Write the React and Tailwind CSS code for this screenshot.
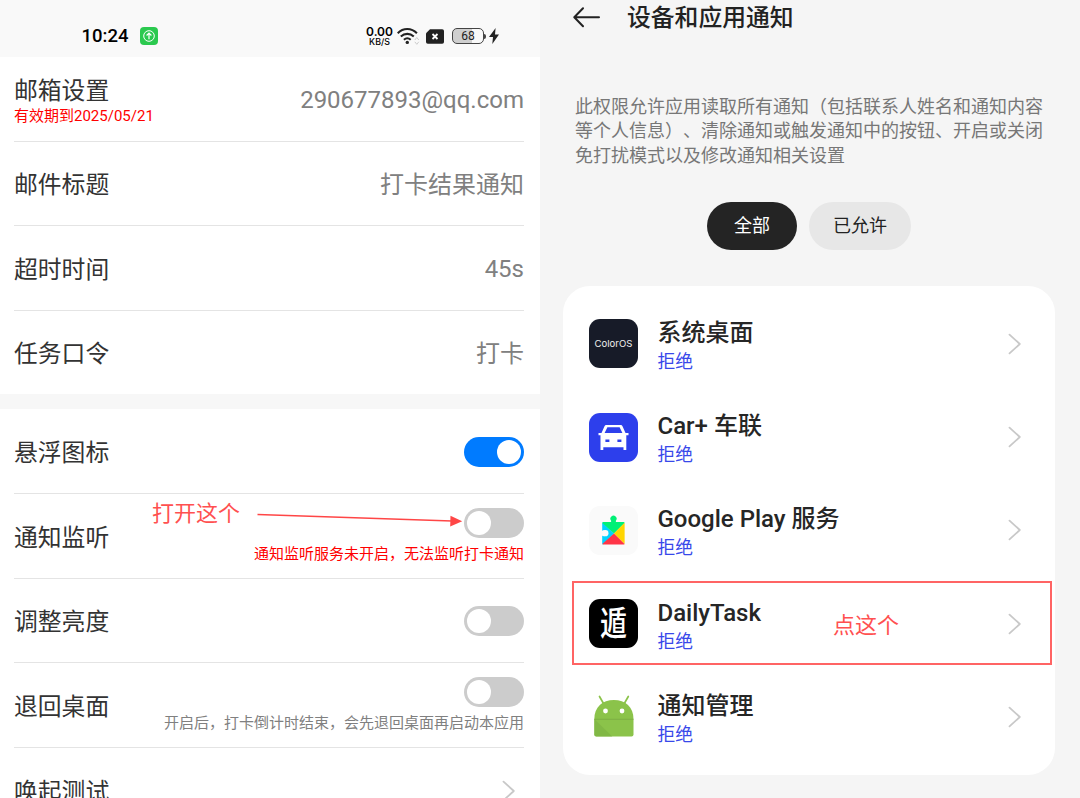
import React from "react";

function Chevron({ className = "" }) {
  return (
    <svg className={`h-[22px] w-[14px] shrink-0 ${className}`} viewBox="0 0 14 22" fill="none" stroke="#c8c8c8" strokeWidth="1.8" strokeLinecap="round" strokeLinejoin="round">
      <path d="M1.5 1.7 11.8 11 1.5 20.3" />
    </svg>
  );
}

function Toggle({ on = false }) {
  return (
    <div className={`flex h-[30px] w-[60px] items-center rounded-full px-[3px] ${on ? "justify-end bg-[#007bff]" : "justify-start bg-[#cccccc]"}`}>
      <div className="size-[24px] rounded-full bg-white" />
    </div>
  );
}

function Row({ label, height, last = false, children }) {
  return (
    <div className={`flex shrink-0 items-center justify-between pt-px ${height} ${last ? "" : "border-b border-[#e4e4e4]"}`}>
      <div className="pt-[2px] text-[23.8px] leading-8 text-[#333333]">{label}</div>
      {children}
    </div>
  );
}

function Value({ children }) {
  return <div className="pt-px text-[24px] leading-8 text-[#808080]">{children}</div>;
}

function StatusBar() {
  return (
    <div className="flex h-[57px] shrink-0 items-center justify-between bg-[#f9f9f9] pt-[15px] pr-[41px] pl-[81.500px]">
      <div className="flex items-center">
        <div className="w-[58.500px] text-[18.500px] leading-6 font-medium text-black">10:24</div>
        <svg className="size-[18px]" viewBox="0 0 18 18" fill="none" stroke="#fff">
          <rect width="18" height="18" rx="4" fill="#2bc94f" stroke="none" />
          <circle cx="9" cy="9" r="5.3" strokeWidth="1" />
          <path d="M9 12.2V6.2M6.6 8.5 9 6.1l2.4 2.4" strokeWidth="1.2" />
        </svg>
      </div>
      <div className="flex items-center">
        <div className="flex w-[27px] flex-col items-center font-[Inter] text-black">
          <div className="text-[12px] leading-[10px] font-semibold">0.00</div>
          <div className="text-[8.800px] leading-[9px] font-medium">KB/S</div>
        </div>
        <svg className="ml-[4px] h-[18px] w-[23px]" viewBox="0 0 23 18" fill="none">
          <path d="M.7 6.200C6.200.6 14.400.6 19.900 6.200M3.800 9.600c3.900-3.700 9.100-3.700 13 0M6.900 12.700c2.200-1.900 4.600-1.900 6.800 0" stroke="#222" strokeWidth="2.100" />
          <circle cx="10.3" cy="15.400" r="1.700" fill="#222" />
          <path d="m17.800 13 2-2.500 2 2.500M17.800 14.800l2 2.500 2-2.500" stroke="#ccc" strokeWidth="1" />
        </svg>
        <svg className="ml-[6px] h-[15px] w-[18px]" viewBox="0 0 18 15">
          <path d="M4 .3h12.2A1.8 1.8 0 0 1 18 2.100v10.800a1.800 1.800 0 0 1-1.800 1.800H1.800A1.800 1.800 0 0 1 0 12.900V4.300z" fill="#222" />
          <path d="m6.500 5 5 5m0-5-5 5" stroke="#fff" strokeWidth="1.800" />
        </svg>
        <div className="ml-[8px] flex h-[16px] w-[32px] items-center justify-center rounded-[5px] border-[1.500px] border-[#444] bg-linear-to-r from-[#cfcfcf] from-65% to-[#f9f9f9] to-65% text-[12px] leading-[14px] text-[#222]">68</div>
        <div className="h-[5px] w-[2px] rounded-r bg-[#444]" />
        <svg className="ml-[3px] h-[16px] w-[10px]" viewBox="0 0 10 16">
          <path d="M6.600 0 0 9.100h4L3.300 16 10 6.400H6z" fill="#222" />
        </svg>
      </div>
    </div>
  );
}

function SettingsPanel() {
  return (
    <section className="relative flex h-[798px] w-[540px] shrink-0 flex-col overflow-hidden bg-white">
      <StatusBar />
      <div className="flex flex-col pr-[16px] pl-[14px]">
        <Row
          height="h-[85px]"
          label={
            <div className="pt-px">
              <div className="leading-[30px]">邮箱设置</div>
              <div className="text-[15px] leading-[21px] text-[#ff0000]">有效期到2025/05/21</div>
            </div>
          }
        >
          <Value>290677893@qq.com</Value>
        </Row>
        <Row height="h-[84px]" label="邮件标题"><Value>打卡结果通知</Value></Row>
        <Row height="h-[85px]" label="超时时间"><Value>45s</Value></Row>
        <Row height="h-[83px]" label="任务口令" last><Value>打卡</Value></Row>
      </div>
      <div className="h-[15px] shrink-0 bg-[#f7f7f7]" />
      <div className="flex flex-col pr-[16px] pl-[14px]">
        <Row height="h-[85px]" label="悬浮图标"><Toggle on /></Row>
        <Row height="h-[85px]" label="通知监听">
          <div className="flex flex-col items-end gap-1">
            <Toggle />
            <div className="pt-px text-[15px] leading-[22px] text-[#ff0000]">通知监听服务未开启，无法监听打卡通知</div>
          </div>
        </Row>
        <Row height="h-[84px]" label="调整亮度"><Toggle /></Row>
        <Row height="h-[85px]" label="退回桌面">
          <div className="flex flex-col items-end gap-1">
            <Toggle />
            <div className="pt-px text-[15px] leading-[22px] text-[#808080]">开启后，打卡倒计时结束，会先退回桌面再启动本应用</div>
          </div>
        </Row>
        <Row height="h-[84px]" label="唤起测试" last><Chevron className="mr-[8px]" /></Row>
      </div>
      <div className="absolute top-[498px] left-[152px] text-[22px] leading-8 text-[#ff5050]">打开这个</div>
      <svg className="absolute top-[508px] left-[256px] h-[20px] w-[208px]" viewBox="0 0 208 20">
        <path d="M1.500 6.500 196 13" stroke="#ff4646" strokeWidth="1.600" />
        <path d="m194.500 7.700 11.700 5.600-12 5.200z" fill="#ff4646" />
      </svg>
    </section>
  );
}

function ColorOsIcon() {
  return (
    <div className="flex size-[49px] items-center justify-center rounded-[11px] bg-[#171b28] font-[Inter] text-[9.600px] leading-none text-[#eeeeee]">ColorOS</div>
  );
}

function CarIcon() {
  return (
    <svg className="size-[49px]" viewBox="0 0 49 49">
      <rect width="49" height="49" rx="11" fill="#2d3fec" />
      <path fillRule="evenodd" fill="#fff" d="M17.500 12h14c.9 0 1.600.5 2 1.300l3 6.700H39.500v2.300h-2.200V37h-2.800v-2.800H14.300V37h-2.800V22.300H9.500V20h3l3-6.700c.4-.8 1.100-1.300 2-1.300zm.9 2.300L15.600 20h17.800l-2.800-5.700zM16.400 26.600v2.400h4v-2.400zm12 0v2.400h4v-2.400z" />
    </svg>
  );
}

function PlayIcon() {
  return (
    <svg className="size-[49px]" viewBox="0 0 49 49">
      <rect width="49" height="49" rx="11" fill="#fafafa" />
      <path d="M13.700 16.500 25 27.500 14 38.500a1 1 0 0 1-.8-1v-7.700a2.900 2.900 0 1 0 0-5V17z" fill="#00d2ff" />
      <circle cx="16.400" cy="27.200" r="3.100" fill="#fafafa" />
      <path d="M12.500 25.800h3v2.800h-3z" fill="#fafafa" />
      <path d="M13.300 16.900c0-.6.400-.9 1-.9h7.800v-1.200a3.100 3.100 0 1 1 4.800 0V16h7.700c.6 0 1 .3 1 .9L25 27.500z" fill="#00f076" />
      <path d="M35.600 16.700v21.200L25 27.500z" fill="#ffd500" />
      <path d="M25 27.500 35.600 37.900c-.2.400-.5.600-1 .6H14.200c-.4 0-.7-.2-.9-.5z" fill="#ff3547" />
    </svg>
  );
}

function DailyTaskIcon() {
  return (
    <div className="flex size-[49px] items-center justify-center rounded-[11px] bg-black text-[27px] leading-none font-medium text-white">
      <span className="translate-y-[2px] scale-y-[1.280]">遁</span>
    </div>
  );
}

function AndroidIcon() {
  return (
    <svg className="size-[49px]" viewBox="0 0 49 49">
      <path d="m10.500 4.500 4 7M39.300 4.500l-4 7" stroke="#8bc34a" strokeWidth="1.700" strokeLinecap="round" />
      <path d="M5.300 27C5.300 15 13.500 8 24.900 8s19.600 7 19.600 19z" fill="#8bc34a" />
      <path d="M5.300 27h39.200v15.500a2 2 0 0 1-2 2H7.300a2 2 0 0 1-2-2z" fill="#8bc34a" />
      <path d="m5.300 27 18 17.500h-16a2 2 0 0 1-2-2z" fill="#7eb443" opacity=".7" />
      <path d="M5.300 27.300h39.200" stroke="#7aab42" strokeWidth=".8" />
      <circle cx="16.500" cy="19" r="2.400" fill="#fff" />
      <circle cx="33" cy="19" r="2.400" fill="#fff" />
    </svg>
  );
}

const apps = [
  { name: "系统桌面", Icon: ColorOsIcon },
  { name: "Car+ 车联", Icon: CarIcon },
  { name: "Google Play 服务", Icon: PlayIcon },
  { name: "DailyTask", Icon: DailyTaskIcon },
  { name: "通知管理", Icon: AndroidIcon },
];

function NotificationPanel() {
  return (
    <section className="relative flex h-[798px] w-[540px] flex-col bg-[#f5f5f5]">
      <header className="flex h-[36px] items-center pl-[33px]">
        <svg className="h-[22px] w-[28px]" viewBox="0 0 28 22" fill="none" stroke="#222" strokeWidth="2" strokeLinecap="round" strokeLinejoin="round">
          <path d="M26 10.300H1.500M10 1.300 1.300 10.300l8.700 9" />
        </svg>
        <h1 className="ml-[26px] text-[23.800px] leading-8 font-medium text-[#222222]">设备和应用通知</h1>
      </header>
      <p className="mt-[59px] ml-[35px] w-[475px] text-[18px] leading-[24.300px] text-[#777777] [text-spacing-trim:space-all]">
        此权限允许应用读取所有通知（包括联系人姓名和通知内容<br />
        等个人信息）、清除通知或触发通知中的按钮、开启或关闭<br />
        免打扰模式以及修改通知相关设置
      </p>
      <div className="mt-[34px] ml-[167px] flex gap-[12px] text-[18px] leading-6">
        <div className="flex h-[48px] w-[90px] items-center justify-center rounded-full bg-[#242424] text-white">全部</div>
        <div className="flex h-[48px] w-[102px] items-center justify-center rounded-full bg-[#e7e7e7] text-[#222222]">已允许</div>
      </div>
      <div className="mt-[36px] ml-[23px] flex h-[489px] w-[492px] flex-col rounded-[27px] bg-white pt-[11.500px] pr-[33px] pl-[26px]">
        {apps.map(({ name, Icon }) => (
          <div key={name} className="flex h-[93.200px] shrink-0 items-center">
            <Icon />
            <div className="ml-[19.500px] flex flex-1 flex-col pt-[5px]">
              <div className="text-[24px] leading-[31px] font-medium text-[#262626]">{name}</div>
              <div className="text-[17.800px] leading-[26px] text-[#3848ea]">拒绝</div>
            </div>
            <Chevron />
          </div>
        ))}
      </div>
      <div className="absolute top-[581px] left-[32px] h-[84px] w-[480px] border-2 border-[#ff6464]" />
      <div className="absolute top-[610px] left-[293px] text-[22px] leading-8 text-[#ff5050]">点这个</div>
    </section>
  );
}

export default function App() {
  return (
    <main className="flex h-[798px] w-[1080px] overflow-hidden bg-white font-[Roboto,'Noto_Sans_CJK_SC',sans-serif]">
      <SettingsPanel />
      <NotificationPanel />
    </main>
  );
}
